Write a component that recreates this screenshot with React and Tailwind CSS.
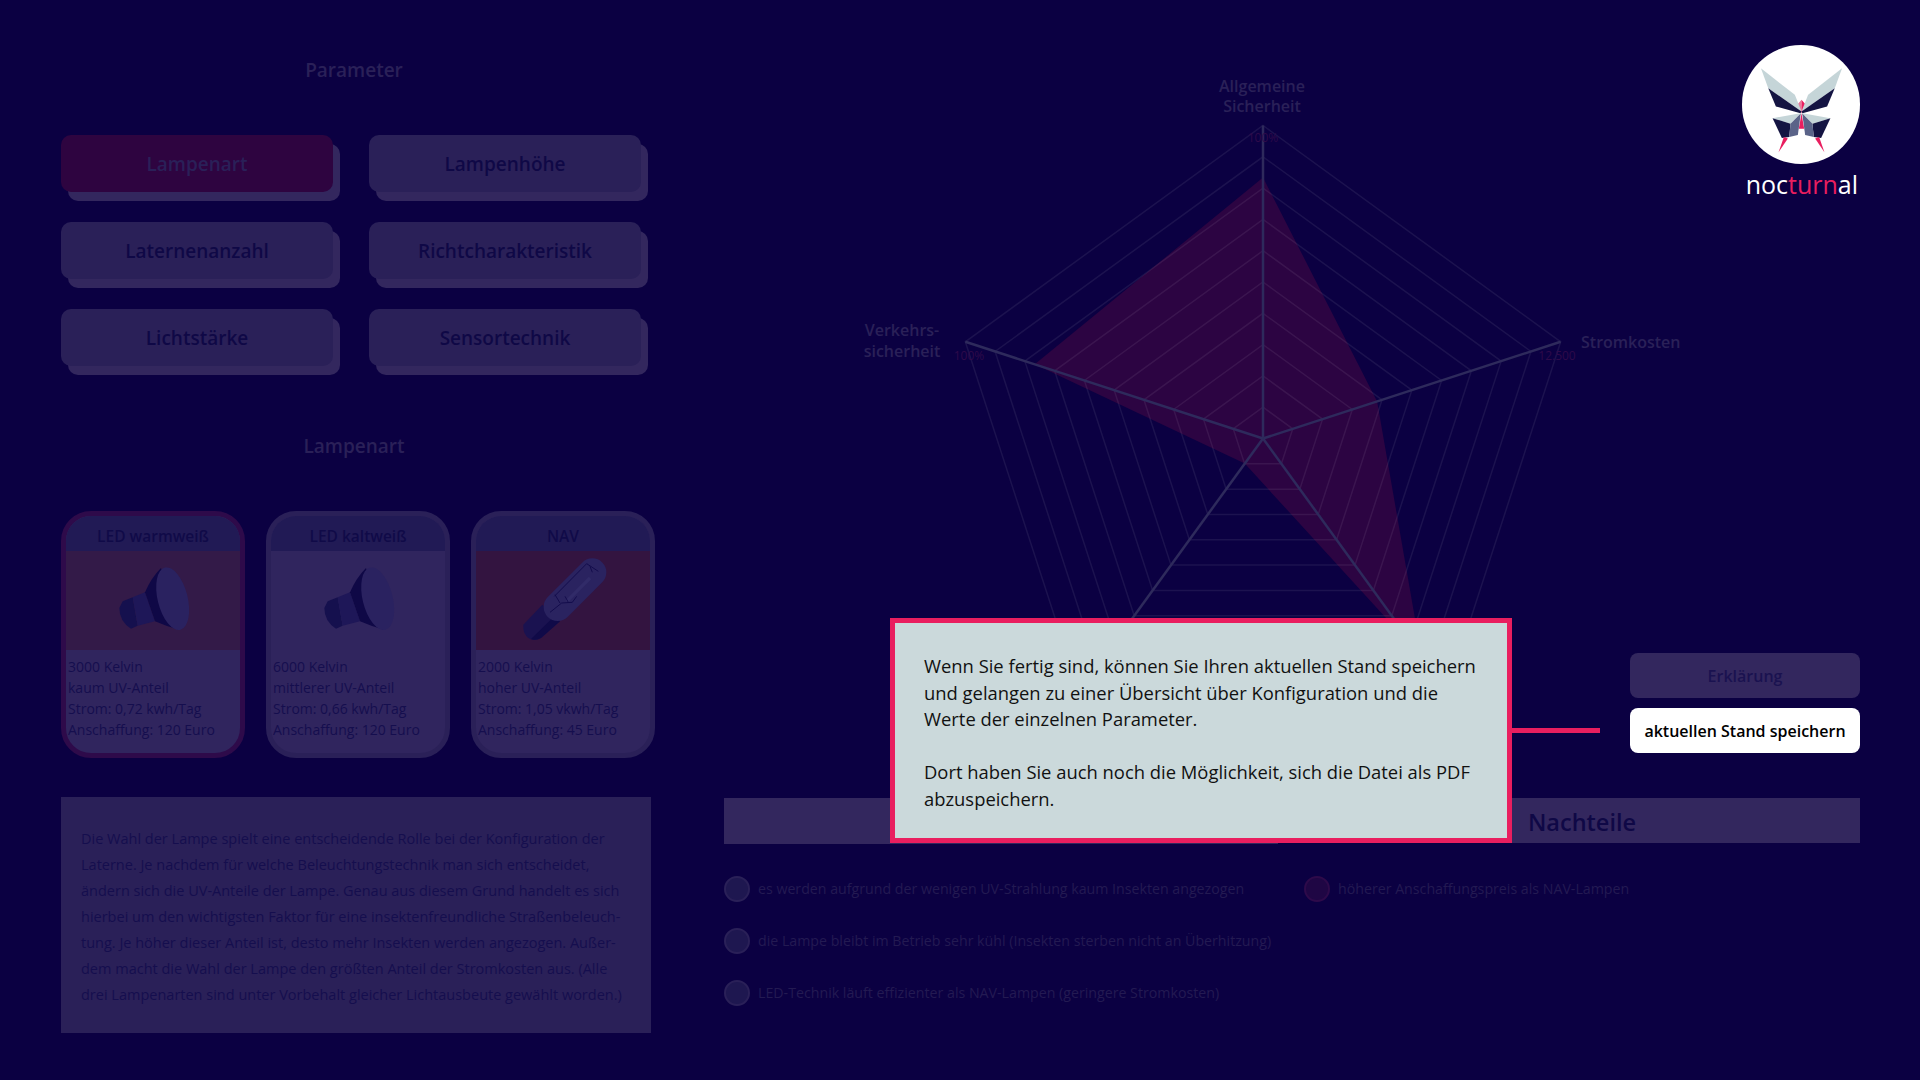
import React from "react";

const CX = 1263;
const CY = 438.5;
const R = 313;
const ANGLES = [-90, -18, 54, 126, 198].map(a => (a * Math.PI) / 180);

const pt = (r, i) => [CX + r * Math.cos(ANGLES[i]), CY + r * Math.sin(ANGLES[i])];
const poly = vals => vals.map((r, i) => pt(r, i).join(",")).join(" ");

const PARAMS = ["Lampenart", "Lampenhöhe", "Laternenanzahl", "Richtcharakteristik", "Lichtstärke", "Sensortechnik"];

const LAMPS = [
  { name: "LED warmweiß", lines: ["3000 Kelvin", "kaum UV-Anteil", "Strom: 0,72 kwh/Tag", "Anschaffung: 120 Euro"], border: "border-[#2e0a4a]", img: "bg-[#331a48]", icon: "spot" },
  { name: "LED kaltweiß", lines: ["6000 Kelvin", "mittlerer UV-Anteil", "Strom: 0,66 kwh/Tag", "Anschaffung: 120 Euro"], border: "border-[#2a2058]", img: "bg-[#30255e]", icon: "spot" },
  { name: "NAV", lines: ["2000 Kelvin", "hoher UV-Anteil", "Strom: 1,05 vkwh/Tag", "Anschaffung: 45 Euro"], border: "border-[#2a2058]", img: "bg-[#331440]", icon: "bulb" }
];

const PROS = [
  "es werden aufgrund der wenigen UV-Strahlung kaum Insekten angezogen",
  "die Lampe bleibt im Betrieb sehr kühl (Insekten sterben nicht an Überhitzung)",
  "LED-Technik läuft effizienter als NAV-Lampen (geringere Stromkosten)"
];

function Butterfly() {
  return (
    <svg viewBox="-53 -45 353 358" className="w-full h-full">
      <polygon points="125,120 112,135 125,160" fill="#e57a9b" />
      <polygon points="125,120 138,135 125,160" fill="#e91e5f" />
      <polygon points="3,25 105,105 125,155 25,85" fill="#c5d5d8" />
      <polygon points="25,85 125,155 122,160 48,140" fill="#141442" />
      <polygon points="247,25 145,105 125,155 225,85" fill="#c5d5d8" />
      <polygon points="225,85 125,155 128,160 202,140" fill="#141442" />
      <polygon points="125,160 117,207 133,207" fill="#e91e5f" />
      <polygon points="38,175 122,160 92,192" fill="#c5d5d8" />
      <polygon points="212,175 128,160 158,192" fill="#c5d5d8" />
      <polygon points="38,175 92,192 88,232 66,235" fill="#141442" />
      <polygon points="212,175 158,192 162,232 184,235" fill="#141442" />
      <polygon points="92,192 123,160 114,226 88,232" fill="#5a6388" />
      <polygon points="158,192 127,160 136,226 162,232" fill="#5a6388" />
      <polygon points="72,232 84,236 56,278" fill="#e91e5f" />
      <polygon points="178,232 166,236 194,278" fill="#e91e5f" />
    </svg>
  );
}

function SpotIcon() {
  return (
    <svg viewBox="0 0 270 255" className="w-[90px] h-[85px] ml-[6px]">
      <path d="M35 130 L65 118 L80 203 L60 212 Q25 190 25 150 Z" fill="#15104e" />
      <path d="M65 118 L102 103 L132 190 L80 203 Z" fill="#1e1758" />
      <path d="M102 103 Q120 60 150 30 L205 215 Q165 205 132 190 Z" fill="#0f0846" />
      <ellipse cx="185" cy="122" rx="45" ry="96" transform="rotate(-14 185 122)" fill="#2a2260" />
    </svg>
  );
}

function BulbIcon() {
  return (
    <svg viewBox="0 0 300 285" className="w-[100px] h-[95px] ml-[3px]">
      <path d="M82 155 L135 205 L78 255 Q62 265 45 258 Q22 245 25 215 Z" fill="#1a1250" />
      <path d="M118 190 L135 205 L78 255 Q62 263 48 258 Z" fill="#100a48" />
      <line x1="232" y1="58" x2="128" y2="162" stroke="#2a2360" strokeWidth="84" strokeLinecap="round" />
      <line x1="225" y1="75" x2="155" y2="145" stroke="#312b68" strokeWidth="10" />
      <path d="M215 32 L118 130 M215 32 L250 55 M225 40 L232 58 M120 125 L135 150 M105 178 L140 150 L172 148 L185 130 M150 130 L160 148" fill="none" stroke="#130c4c" strokeWidth="3" />
    </svg>
  );
}

function LampCard({ lamp }) {
  return (
    <div className={`w-[184px] h-[247px] rounded-[30px] border-[5px] overflow-hidden bg-[#30255e] text-[#150e4e] ${lamp.border}`}>
      <div className="h-[35px] pt-[7px] bg-[#211a55] flex items-center justify-center text-[15.5px] font-semibold text-[#100a48]">{lamp.name}</div>
      <div className={`h-[99px] flex items-center justify-center ${lamp.img}`}>
        {lamp.icon === "spot" ? <SpotIcon /> : <BulbIcon />}
      </div>
      <div className="pl-[2px] pt-[6px] text-[14px] leading-[21px] whitespace-nowrap">
        {lamp.lines.map(l => <div key={l}>{l}</div>)}
      </div>
    </div>
  );
}

function Bullet({ text, red }) {
  return (
    <div className="flex items-center gap-2 h-[26px]">
      <span className={`w-[26px] h-[26px] rounded-full border-2 shrink-0 ${red ? "border-[#2e0a4a] bg-[#1f0644]" : "border-[#2a2058] bg-[#1e1750]"}`} />
      <span className="text-[14.2px] text-[#231a52] whitespace-nowrap">{text}</span>
    </div>
  );
}

function Radar() {
  const rings = Array.from({ length: 10 }, (_, i) => (R * (i + 1)) / 10);
  return (
    <svg viewBox="724 0 906 798" className="w-[906px] h-[798px] shrink-0 overflow-visible">
      <polygon points={poly([261, 120, 270, 31, 240])} fill="#2c0442" />
      {rings.map(r => (
        <polygon key={r} points={poly([r, r, r, r, r])} fill="none" stroke="#ffffff" strokeOpacity="0.07" strokeWidth="1.5" />
      ))}
      {ANGLES.map((_, i) => {
        const [x, y] = pt(R, i);
        return <line key={i} x1={CX} y1={CY} x2={x} y2={y} stroke="#2e2a5c" strokeWidth="2.5" />;
      })}
      <g fontSize="16" fontWeight="600" fill="#2a2058" fontFamily="'Open Sans', sans-serif">
        <text x="1262" y="92" textAnchor="middle">Allgemeine</text>
        <text x="1262" y="112" textAnchor="middle">Sicherheit</text>
        <text x="1581" y="348">Stromkosten</text>
        <text x="902" y="336" textAnchor="middle">Verkehrs-</text>
        <text x="902" y="357" textAnchor="middle">sicherheit</text>
      </g>
      <g fontSize="12" fill="#2e0a4a" textAnchor="middle" fontFamily="'Open Sans', sans-serif">
        <text x="1263" y="142">100%</text>
        <text x="969" y="360">100%</text>
        <text x="1557" y="360">12.500</text>
      </g>
    </svg>
  );
}

export default function App() {
  return (
    <div className="relative w-[1920px] h-[1080px] overflow-hidden bg-[#0b0042] flex pl-[61px] font-['Open_Sans',sans-serif]">
      {/* Left column */}
      <div className="w-[594px] shrink-0 pt-[56px]">
        <div className="h-[28px] w-[586px] flex items-center justify-center text-[19px] font-semibold text-[#2a2058]">Parameter</div>
        <div className="mt-[51px] grid grid-cols-[272px_272px] gap-x-[36px] gap-y-[30px]">
          {PARAMS.map((p, i) => (
            <div
              key={p}
              className={`h-[57px] pt-[1px] rounded-[10px] shadow-[7px_9px_0_0_#33275e] flex items-center justify-center text-[19px] font-semibold ${i === 0 ? "bg-[#2e0440] text-[#2a2058]" : "bg-[#2a2058] text-[#0f0846]"}`}
            >
              {p}
            </div>
          ))}
        </div>
        <div className="mt-[66px] h-[28px] w-[586px] flex items-center justify-center text-[19px] font-semibold text-[#2a2058]">Lampenart</div>
        <div className="mt-[51px] flex gap-[21px]">
          {LAMPS.map(l => <LampCard key={l.name} lamp={l} />)}
        </div>
        <div className="mt-[39px] w-[590px] h-[236px] bg-[#2a2058] pl-[20px] pt-[29px] text-[14.5px] leading-[26px] text-[#150e4e] whitespace-nowrap">
          <div>Die Wahl der Lampe spielt eine entscheidende Rolle bei der Konfiguration der</div>
          <div>Laterne. Je nachdem für welche Beleuchtungstechnik man sich entscheidet,</div>
          <div>ändern sich die UV-Anteile der Lampe. Genau aus diesem Grund handelt es sich</div>
          <div>hierbei um den wichtigsten Faktor für eine insektenfreundliche Straßenbeleuch-</div>
          <div>tung. Je höher dieser Anteil ist, desto mehr Insekten werden angezogen. Außer-</div>
          <div>dem macht die Wahl der Lampe den größten Anteil der Stromkosten aus. (Alle</div>
          <div>drei Lampenarten sind unter Vorbehalt gleicher Lichtausbeute gewählt worden.)</div>
        </div>
      </div>

      {/* Right column */}
      <div className="ml-[69px] w-[1136px] shrink-0 flex flex-col">
        <div className="h-[798px] flex">
          <Radar />
          <div className="w-[230px] flex flex-col">
            <div className="mt-[45px] ml-[112px] w-[118px] h-[119px] rounded-full bg-white"><Butterfly /></div>
            <div className="mt-[5px] text-right pr-[2px] text-[25px] leading-[30px] text-white">
              noc<span className="text-[#e91e5f]">turn</span>al
            </div>
            <div className="mt-[454px] h-[45px] rounded-[8px] bg-[#33275e] flex items-center justify-center text-[16px] font-semibold text-[#1a1250]">Erklärung</div>
            <div className="mt-[10px] h-[45px] rounded-[8px] bg-white flex items-center justify-center text-[16px] font-semibold text-black">aktuellen Stand speichern</div>
          </div>
        </div>
        <div className="flex gap-[26px]">
          <div className="w-[554px] h-[46px] bg-[#33275e]" />
          <div className="w-[556px] h-[45px] pt-[4px] bg-[#33275e] flex items-center justify-center text-[23.5px] font-semibold text-[#0f0846]">Nachteile</div>
        </div>
        <div className="mt-[32px] flex gap-[26px]">
          <div className="w-[554px] flex flex-col gap-[26px]">
            {PROS.map(t => <Bullet key={t} text={t} />)}
          </div>
          <div className="w-[556px]">
            <Bullet red text="höherer Anschaffungspreis als NAV-Lampen" />
          </div>
        </div>
      </div>

      {/* Tutorial overlay */}
      <div className="absolute left-[890px] top-[618px] w-[622px] h-[225px] border-[5px] border-[#e91e5f] bg-[#cbd9db] pl-[29px] pt-[30px] text-[18.4px] leading-[26.6px] text-[#111111]">
        <p>Wenn Sie fertig sind, können Sie Ihren aktuellen Stand speichern<br />und gelangen zu einer Übersicht über Konfiguration und die<br />Werte der einzelnen Parameter.</p>
        <p className="mt-[26.6px]">Dort haben Sie auch noch die Möglichkeit, sich die Datei als PDF<br />abzuspeichern.</p>
      </div>
      <div className="absolute left-[1512px] top-[728px] w-[88px] h-[5px] bg-[#e91e5f]" />
    </div>
  );
}
